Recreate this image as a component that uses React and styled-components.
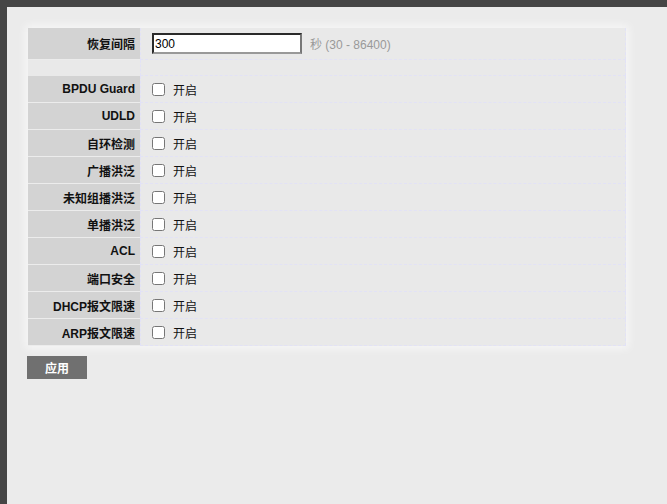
import styled, { createGlobalStyle } from "styled-components"

const GlobalStyle = createGlobalStyle`
html, body {
  margin: 0;
  padding: 0;
  background: #454545;
  font-family: "Liberation Sans", "Noto Sans CJK SC", Arial, sans-serif;
}
`

const Page = styled.div`
margin: 7px 0 0 7px;
min-height: 497px;
background: #ebebeb;
padding: 21px 0 0 20px;
box-sizing: border-box;
`

const Table = styled.div`
width: 598px;
margin-left: 1px;
display: flex;
flex-direction: column;
box-shadow: 0 0 8px 3px rgba(255, 255, 255, 0.55);
background: #e9e9e9;
`

const Row = styled.div`
display: grid;
grid-template-columns: 112px 1fr;
height: ${p => p.$h || 27}px;
`

const Label = styled.div`
background: ${p => (p.$blank ? "transparent" : "#d3d3d3")};
border-bottom: 1px solid ${p => (p.$blank ? "transparent" : "#ececec")};
display: flex;
align-items: center;
justify-content: flex-end;
padding-right: 5px;
font-size: 12px;
font-weight: bold;
color: #111;
`

const Value = styled.div`
border-bottom: 1px dashed #e2e2f6;
border-right: 1px dashed #e2e2f6;
border-left: 1px dashed #e2e2f6;
display: flex;
align-items: center;
padding-left: 8px;
font-size: 12px;
color: #111;
`

const TextInput = styled.input`
width: 150px;
height: 21px;
box-sizing: border-box;
margin: 0 0 0 3px;
padding: 0 1px;
border: 2px solid;
border-color: #2a2a2a #777 #999 #2a2a2a;
font-family: "Liberation Sans", Arial, sans-serif;
font-size: 12px;
color: #000;
outline: none;
`

const Hint = styled.span`
margin-left: 8px;
color: #999;
font-size: 12px;
`

const Check = styled.input`
width: 13px;
height: 13px;
margin: 0 8px 0 3px;
`

const Button = styled.button`
margin-top: 10px;
width: 60px;
height: 23px;
border: none;
background: #707070;
color: #fff;
font-family: "Liberation Sans", "Noto Sans CJK SC", sans-serif;
font-size: 12px;
font-weight: bold;
padding: 0;
`

const items = ["BPDU Guard", "UDLD", "自环检测", "广播洪泛", "未知组播洪泛", "单播洪泛", "ACL", "端口安全", "DHCP报文限速", "ARP报文限速"]

const App = () => {
    return (
        <Page>
            <GlobalStyle />
            <Table>
                <Row $h={32}>
                    <Label>恢复间隔</Label>
                    <Value>
                        <TextInput defaultValue="300" />
                        <Hint>秒 (30 - 86400)</Hint>
                    </Value>
                </Row>
                <Row $h={16}>
                    <Label $blank />
                    <Value />
                </Row>
                {items.map(name => (
                    <Row key={name}>
                        <Label>{name}</Label>
                        <Value>
                            <Check type="checkbox" />
                            开启
                        </Value>
                    </Row>
                ))}
            </Table>
            <Button>应用</Button>
        </Page>
    )
}

export default App
